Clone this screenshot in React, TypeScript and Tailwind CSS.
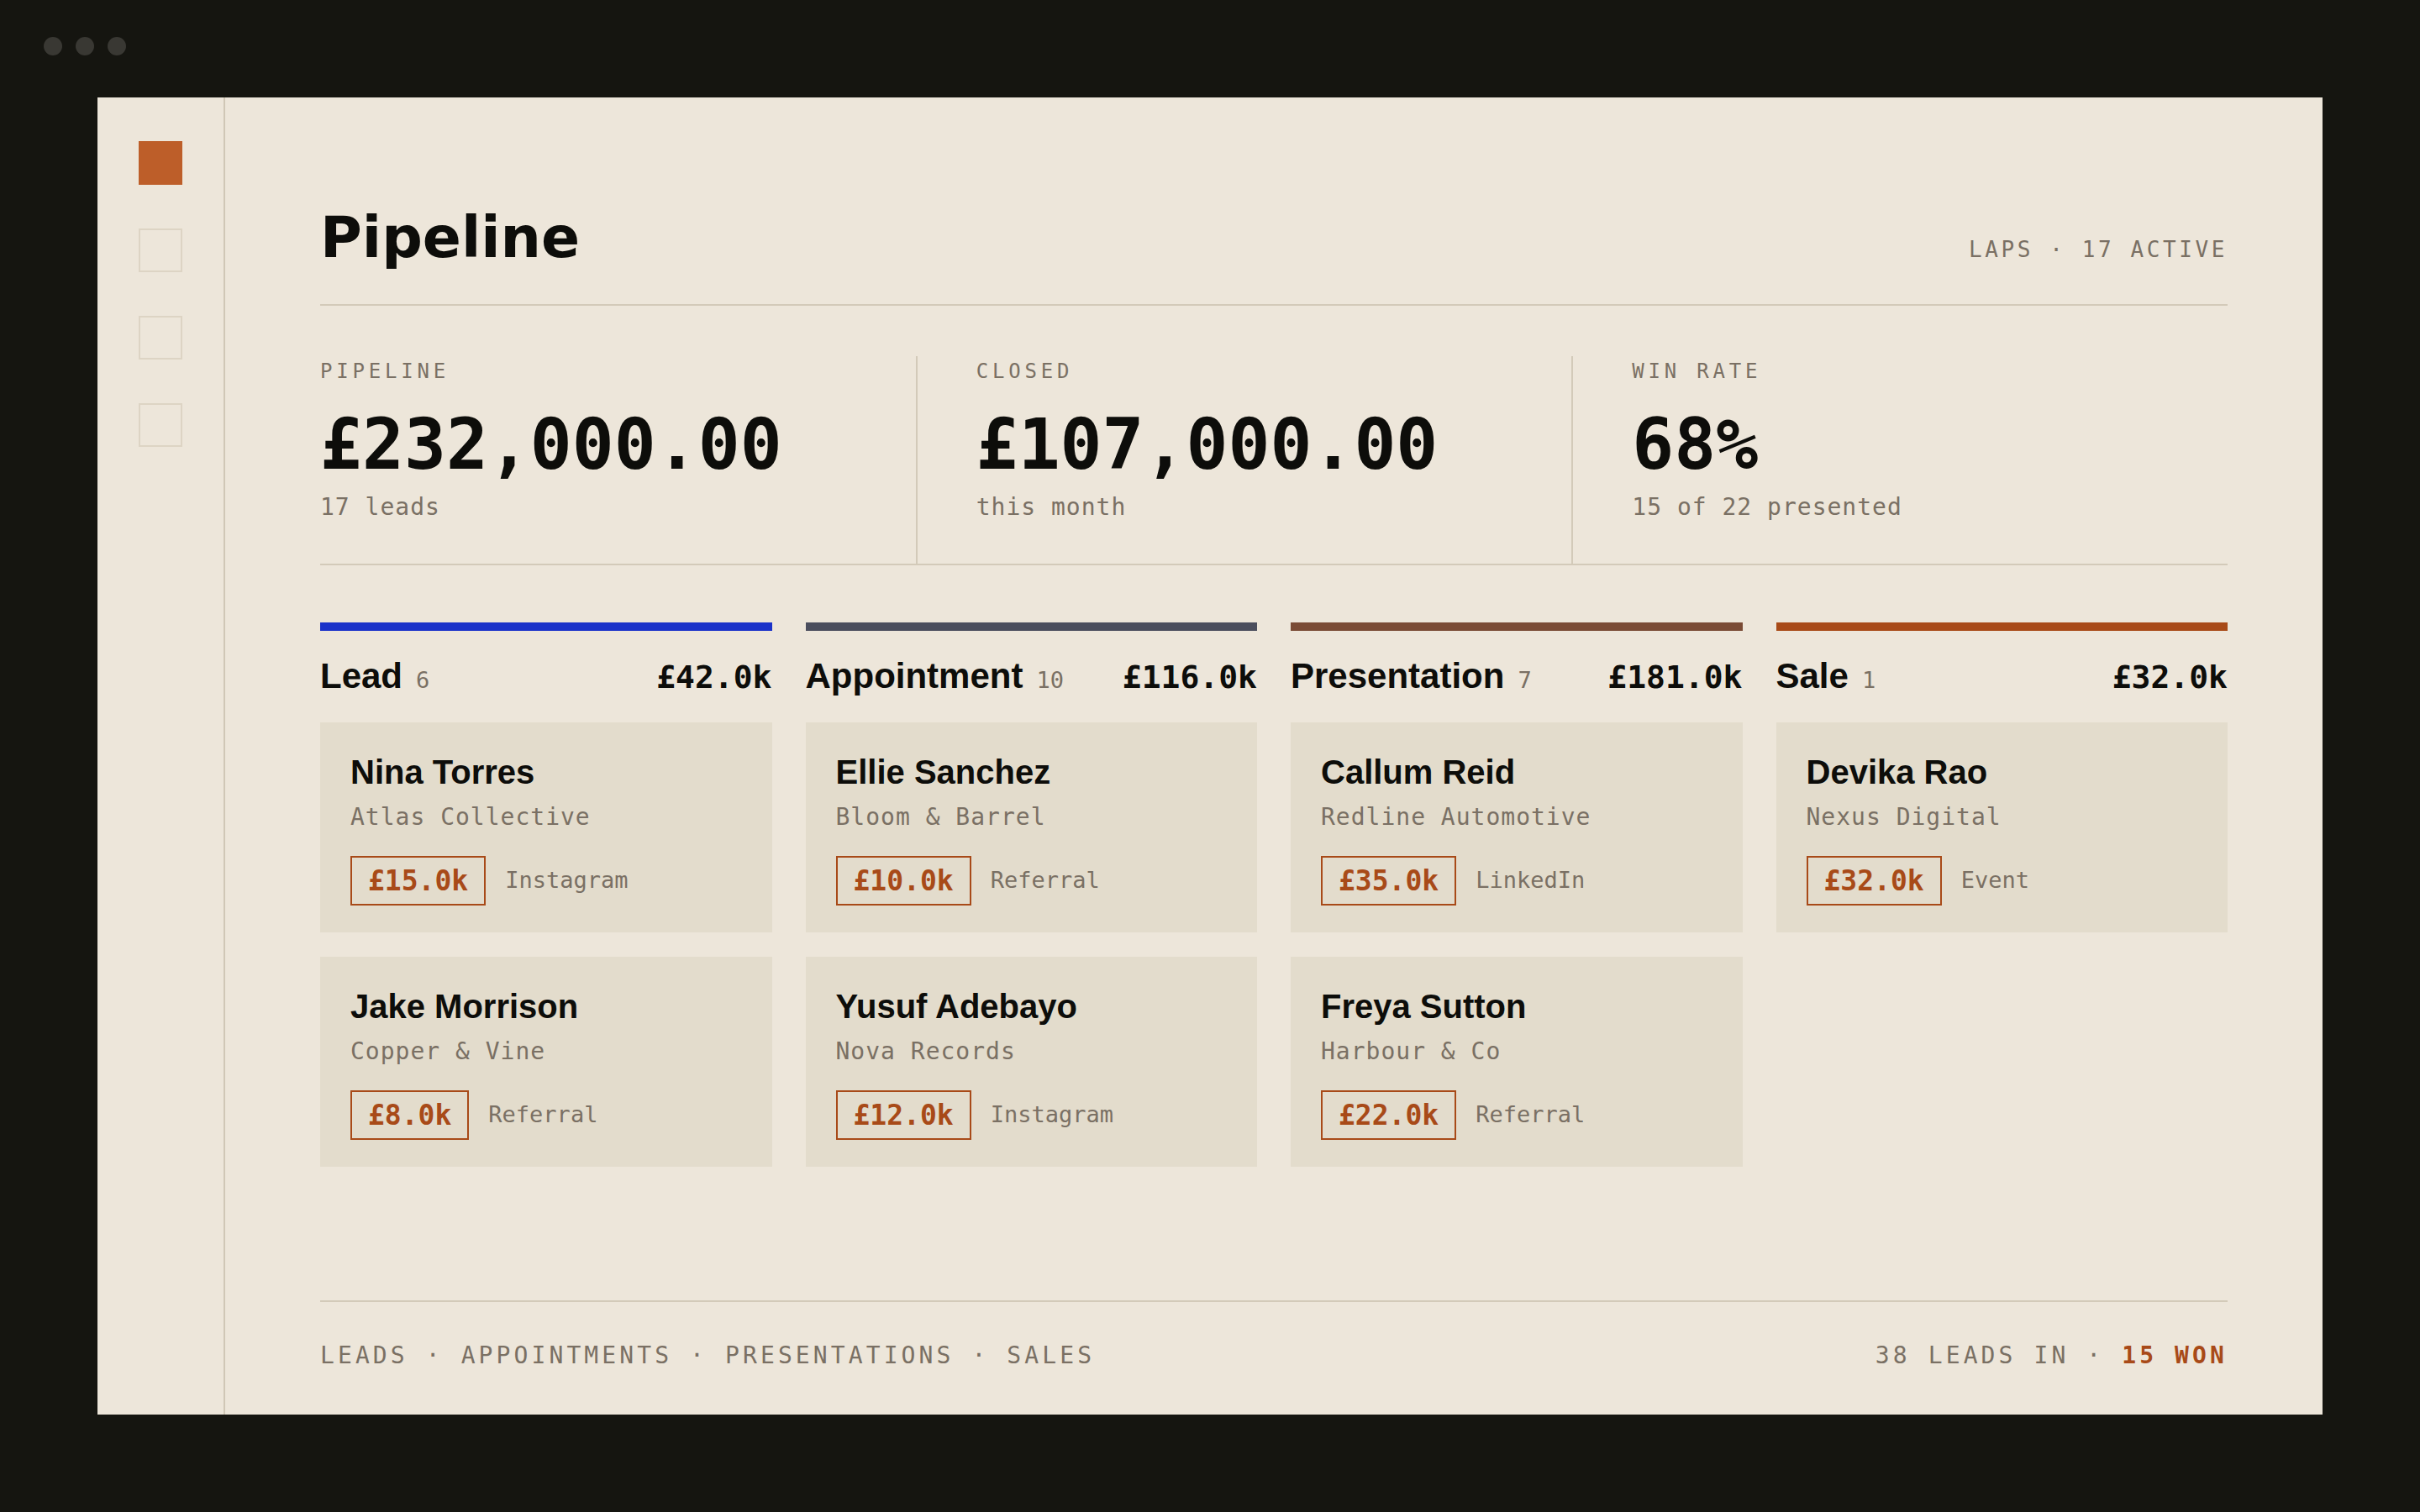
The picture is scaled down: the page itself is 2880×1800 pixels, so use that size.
import React from "react";

const mono = "font-['DejaVu_Sans_Mono','Liberation_Mono',monospace]";
const sans = "font-['Liberation_Sans',Arial,sans-serif]";

interface Deal {
  name: string;
  company: string;
  value: string;
  source: string;
}

interface Stage {
  title: string;
  count: number;
  total: string;
  bar: string;
  deals: Deal[];
}

const stages: Stage[] = [
  {
    title: "Lead",
    count: 6,
    total: "£42.0k",
    bar: "bg-[#1b32c9]",
    deals: [
      { name: "Nina Torres", company: "Atlas Collective", value: "£15.0k", source: "Instagram" },
      { name: "Jake Morrison", company: "Copper & Vine", value: "£8.0k", source: "Referral" },
    ],
  },
  {
    title: "Appointment",
    count: 10,
    total: "£116.0k",
    bar: "bg-[#4b4e5d]",
    deals: [
      { name: "Ellie Sanchez", company: "Bloom & Barrel", value: "£10.0k", source: "Referral" },
      { name: "Yusuf Adebayo", company: "Nova Records", value: "£12.0k", source: "Instagram" },
    ],
  },
  {
    title: "Presentation",
    count: 7,
    total: "£181.0k",
    bar: "bg-[#7a4b35]",
    deals: [
      { name: "Callum Reid", company: "Redline Automotive", value: "£35.0k", source: "LinkedIn" },
      { name: "Freya Sutton", company: "Harbour & Co", value: "£22.0k", source: "Referral" },
    ],
  },
  {
    title: "Sale",
    count: 1,
    total: "£32.0k",
    bar: "bg-[#a84a18]",
    deals: [{ name: "Devika Rao", company: "Nexus Digital", value: "£32.0k", source: "Event" }],
  },
];

const stats = [
  { label: "PIPELINE", value: "£232,000.00", sub: "17 leads" },
  { label: "CLOSED", value: "£107,000.00", sub: "this month" },
  { label: "WIN RATE", value: "68%", sub: "15 of 22 presented" },
];

function DealCard({ deal }: { deal: Deal }) {
  return (
    <div className="bg-[#e3dccc] px-[36px] pt-[35px] pb-[32px] flex flex-col">
      <div className={`${sans} text-[40px] leading-[48px] font-bold text-[#0d0d0a]`}>{deal.name}</div>
      <div className={`${mono} text-[28px] leading-[34px] tracking-[1px] text-[#7a7064] mt-[13px]`}>
        {deal.company}
      </div>
      <div className="flex items-center gap-[23px] mt-[29px]">
        <span
          className={`${mono} border-2 border-[#a84a18] px-[19px] py-[8px] text-[33px] leading-[39px] font-bold text-[#a84a18]`}>
          {deal.value}
        </span>
        <span className={`${mono} text-[27px] text-[#7a7064]`}>{deal.source}</span>
      </div>
    </div>
  );
}

export default function App() {
  return (
    <div className="w-[2880px] h-[1800px] bg-[#151510] flex flex-col">
      {/* window chrome */}
      <div className="h-[116px] flex items-center gap-[16px] px-[52px] pb-[6px]">
        <span className="w-[22px] h-[22px] rounded-full bg-[#393833]" />
        <span className="w-[22px] h-[22px] rounded-full bg-[#393833]" />
        <span className="w-[22px] h-[22px] rounded-full bg-[#393833]" />
      </div>

      <div className="mx-[116px] h-[1568px] bg-[#ede6da] flex">
        {/* sidebar */}
        <aside className="w-[152px] shrink-0 border-r-2 border-[#d0c7b6] flex flex-col items-center pt-[52px] gap-[52px]">
          <span className="w-[52px] h-[52px] bg-[#bd5e29]" />
          <span className="w-[52px] h-[52px] border-2 border-[#ddd4c4]" />
          <span className="w-[52px] h-[52px] border-2 border-[#ddd4c4]" />
          <span className="w-[52px] h-[52px] border-2 border-[#ddd4c4]" />
        </aside>

        <main className="flex-1 px-[113px] pt-[133px] pb-[53px] flex flex-col">
          <header className="flex justify-between items-baseline pb-[45px] border-b-2 border-[#d3cab9]">
            <h1 className="font-['DejaVu_Sans',sans-serif] text-[68px] leading-none font-bold text-[#0d0d0a]">
              Pipeline
            </h1>
            <span className={`${mono} text-[26px] tracking-[3.6px] text-[#7a7064]`}>LAPS · 17 ACTIVE</span>
          </header>

          <section className="flex mt-[60px] border-b-2 border-[#d3cab9]">
            {stats.map((s, i) => (
              <div
                key={s.label}
                className={`flex-1 pr-[70px] pt-[4px] pb-[50px] ${i > 0 ? "border-l-2 border-[#d3cab9] pl-[70px]" : ""}`}>
                <div className={`${mono} text-[24px] leading-[29px] tracking-[4.8px] text-[#7a7064]`}>{s.label}</div>
                <div className={`${mono} text-[83px] leading-none font-bold text-[#0d0d0a] mt-[31px]`}>{s.value}</div>
                <div className={`${mono} text-[28px] leading-[34px] tracking-[1px] text-[#7a7064] mt-[16px]`}>{s.sub}</div>
              </div>
            ))}
          </section>

          <section className="grid grid-cols-4 gap-x-[40px] mt-[68px] items-start">
            {stages.map((stage) => (
              <div key={stage.title} className="flex flex-col">
                <div className={`h-[10px] ${stage.bar}`} />
                <div className="flex items-baseline justify-between mt-[27px]">
                  <div className="flex items-baseline">
                    <span className={`${sans} text-[42px] leading-[50px] font-bold text-[#0d0d0a]`}>{stage.title}</span>
                    <span className={`${mono} text-[27px] text-[#7a7064] ml-[16px]`}>{stage.count}</span>
                  </div>
                  <span className={`${mono} text-[38px] font-bold text-[#0d0d0a]`}>{stage.total}</span>
                </div>
                <div className="flex flex-col gap-[29px] mt-[25px]">
                  {stage.deals.map((d) => (
                    <DealCard key={d.name} deal={d} />
                  ))}
                </div>
              </div>
            ))}
          </section>

          <div className="flex-1" />

          <footer className="border-t-2 border-[#d3cab9] pt-[47px] flex justify-between items-baseline">
            <span className={`${mono} text-[28px] leading-[34px] tracking-[4.1px] text-[#7a7064]`}>
              LEADS · APPOINTMENTS · PRESENTATIONS · SALES
            </span>
            <span className={`${mono} text-[28px] leading-[34px] tracking-[4.1px] text-[#7a7064]`}>
              38 LEADS IN · <span className="font-bold text-[#a84a18]">15 WON</span>
            </span>
          </footer>
        </main>
      </div>
    </div>
  );
}
